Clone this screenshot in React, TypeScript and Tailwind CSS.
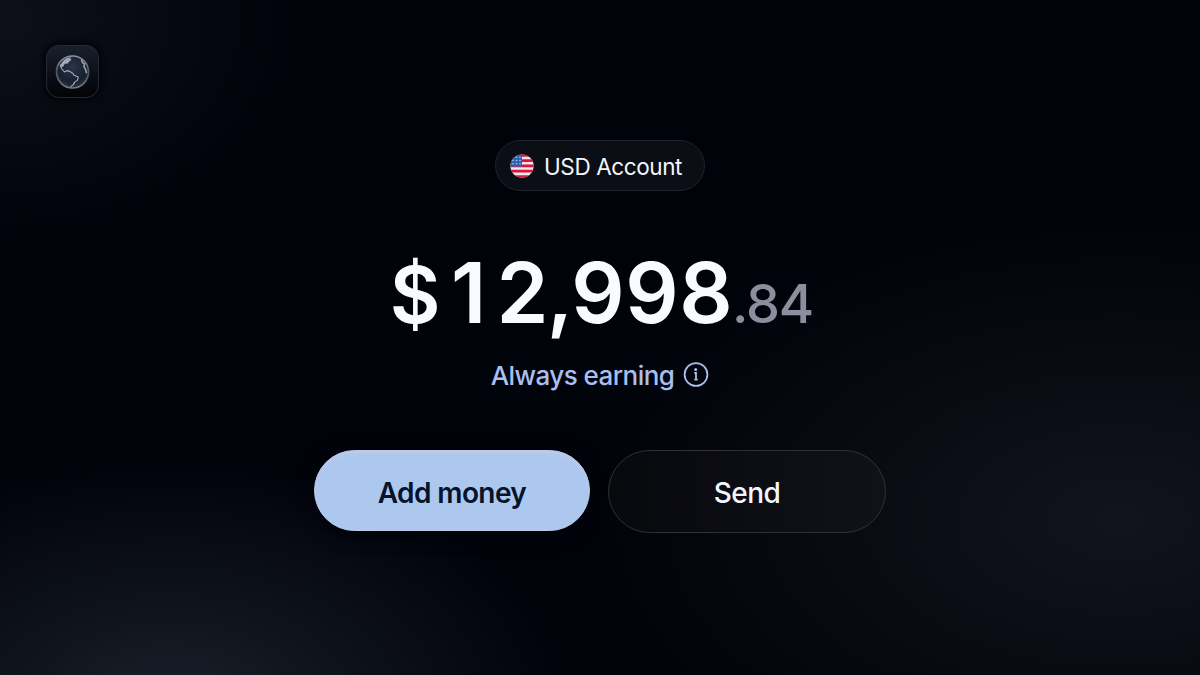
import React from 'react';

const GlobeLogo: React.FC = () => (
  <svg className="h-[38px] w-[38px]" viewBox="0 0 38 38" fill="none" aria-hidden="true">
    <defs>
      <radialGradient id="globe-fill" cx="0.5" cy="0.35" r="0.65">
        <stop offset="0" stopColor="#29354a" />
        <stop offset="0.7" stopColor="#182030" />
        <stop offset="1" stopColor="#2c3340" />
      </radialGradient>
      <linearGradient id="globe-rim" x1="0" y1="0" x2="0" y2="1">
        <stop offset="0" stopColor="#8f96a2" />
        <stop offset="0.5" stopColor="#4f5765" />
        <stop offset="1" stopColor="#747b87" />
      </linearGradient>
    </defs>
    <circle cx="18.5" cy="19" r="16" fill="url(#globe-fill)" stroke="url(#globe-rim)" strokeWidth="1.6" />
    <path
      d="M6.5 11.5 10 7l3-2 4.5-.8-1.5 1.7 1.8 1.1-2.2 1-1.8 2.4-3 .4-1.6 2.7-1.6 1z"
      fill="#a5abb5"
    />
    <path
      d="M6 11.5 7.5 15.5l3 3.5 2.2-1.4 3.1.8 2.9 1.9 1.3 2 4.2 1.8-.6 3-2.7 1.8-1.8 3-2.6 2"
      stroke="#a9aeb8"
      strokeWidth="1.1"
      strokeLinejoin="round"
    />
    <path d="m27.3 6.6 1.4 3.2 1.8 1-.6 2.7 1.6 2.7 1 4" stroke="#9ea5b1" strokeWidth="1.5" strokeLinejoin="round" />
  </svg>
);

const UsFlag: React.FC = () => (
  <svg className="h-6 w-6" viewBox="0 0 24 24" aria-hidden="true">
    <defs>
      <clipPath id="flag-clip">
        <circle cx="12" cy="12" r="11.6" />
      </clipPath>
    </defs>
    <g clipPath="url(#flag-clip)">
      <path fill="#f1e6ed" d="M0 0h24v24H0z" />
      <path
        stroke="#d5163f"
        strokeWidth="2.8"
        d="M0 1.4h24M0 6.6h24M0 11.8h24M0 17.1h24M0 22.6h24"
      />
      <path fill="#2c62b5" d="M0 0h12v12.6H0z" />
      <g fill="#b4cbea">
        <circle cx="6.5" cy="3.2" r=".8" />
        <circle cx="10" cy="3.2" r=".8" />
        <circle cx="3" cy="6.5" r=".8" />
        <circle cx="6.5" cy="6.5" r=".8" />
        <circle cx="10" cy="6.5" r=".8" />
        <circle cx="3" cy="9.8" r=".8" />
        <circle cx="6.5" cy="9.8" r=".8" />
        <circle cx="10" cy="9.8" r=".8" />
      </g>
    </g>
  </svg>
);

const InfoIcon: React.FC = () => (
  <svg className="h-[26px] w-[26px]" viewBox="0 0 26 26" fill="none" aria-hidden="true">
    <circle cx="13" cy="12.5" r="11.4" stroke="currentColor" strokeWidth="1.8" />
    <circle cx="12.7" cy="7.5" r="1.5" fill="currentColor" />
    <path d="M12 11h1v6.6M12 17.6h2" stroke="currentColor" strokeWidth="1.8" strokeLinecap="round" />
  </svg>
);

const cellClass = (char: string) => {
  if (char === '$') return 'w-[52px] text-[78px]';
  if (char === '1') return 'w-[55px]';
  if (char === ',') return 'w-[22px]';
  if (char === '2') return 'w-[53px]';
  return 'w-[54px]';
};

const Amount: React.FC<{ value: string }> = ({ value }) => (
  <span className="inline-flex items-baseline text-[83.5px] font-semibold text-[#f8fbff]">
    {value.split('').map((char, i) => (
      <span key={i} className={`flex justify-center ${cellClass(char)}`}>
        {char}
      </span>
    ))}
  </span>
);

const BACKDROP =
  'bg-[radial-gradient(ellipse_400px_250px_at_170px_710px,#1a202b_0%,#0e121a_45%,transparent_100%),radial-gradient(ellipse_540px_310px_at_1120px_520px,#12131d_0%,#0a0c14_45%,transparent_100%),radial-gradient(ellipse_300px_220px_at_0px_20px,#0e1019_0%,transparent_100%)]';

export default function App() {
  return (
    <div
      className={`flex h-[675px] w-[1200px] flex-col overflow-hidden bg-[#01030b] font-['Inter',sans-serif] ${BACKDROP}`}
    >
      <header className="pt-[45px] pl-[46px]">
        <div className="flex h-[53px] w-[53px] items-center justify-center rounded-[13px] border border-[#242831] bg-linear-to-b from-[#1a202b] to-[#030407] shadow-[0_0_5px_3px_#04050a]">
          <GlobeLogo />
        </div>
      </header>

      <main className="flex flex-col items-center pt-[42px]">
        <button className="flex h-[51px] w-[210px] items-center gap-[10px] rounded-full border border-[#20232b] bg-[#0b0e15] pl-[14px] text-[22.5px] leading-none tracking-[-0.4px] whitespace-nowrap text-[#f4f6fb]">
          <UsFlag />
          <span className="pt-[3px]">USD Account</span>
        </button>

        <div className="mt-[51px] ml-[2px] flex h-[102px] items-baseline leading-[102px] whitespace-nowrap">
          <Amount value="$12,998" />
          <span className="-ml-[1px] text-[54px] font-medium tracking-[-1.2px] text-[#8d8d9d]">.84</span>
        </div>

        <div className="mt-[14px] flex h-[34px] items-center gap-[9px] text-[26px] font-medium tracking-[-0.55px] whitespace-nowrap text-[#a8bfef]">
          <span>Always earning</span>
          <InfoIcon />
        </div>

        <div className="mt-[58px] flex items-start gap-[18px]">
          <button className="h-[81px] w-[276px] rounded-full border border-[#bcc9ea] bg-[#adc8ef] pt-[4px] text-[28px] font-semibold tracking-[-0.6px] text-[#07122b] shadow-[inset_0_2px_2px_#c3c9e6,0_4px_18px_#01020a]">
            Add money
          </button>
          <button className="h-[83px] w-[278px] rounded-full border border-[#303138] bg-linear-to-r from-[#08090d] to-[#11111a] pt-[3px] text-[28px] font-medium tracking-[-0.5px] text-[#f4f6fd]">
            Send
          </button>
        </div>
      </main>
    </div>
  );
}
